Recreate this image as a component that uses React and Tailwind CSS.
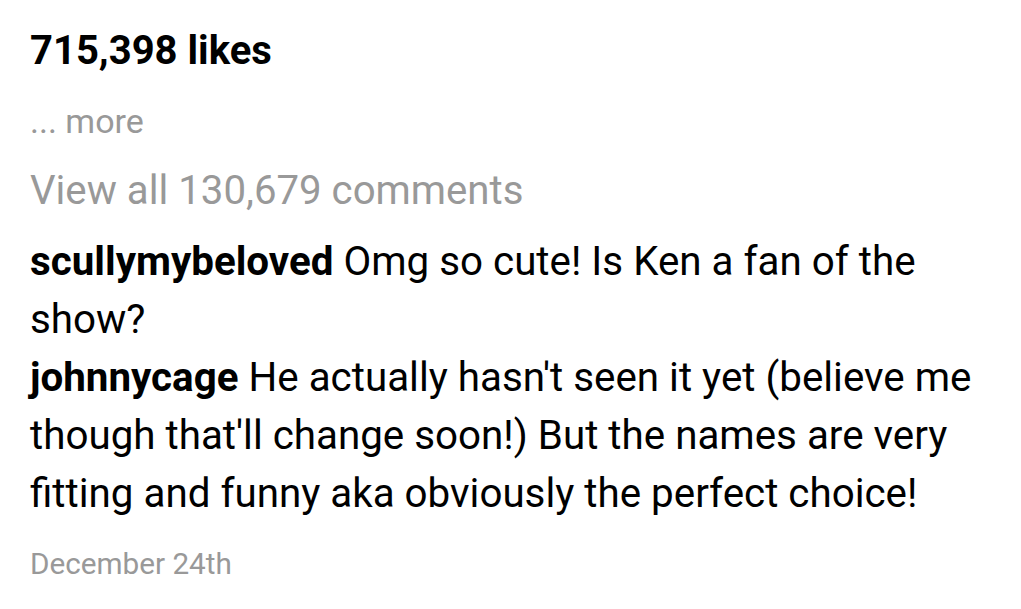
export default function App() {
  return (
    <div className="w-[1021px] h-[609px] bg-white pl-[30px] pr-[30px] pt-[28px] font-['Roboto',sans-serif] text-[40px]">
      <div className="font-bold text-black leading-[46px]">715,398 likes</div>
      <div className="mt-[24px] text-[#999999] text-[34px] leading-[46px]">... more</div>
      <div className="mt-[24px] text-[#999999] text-[40.2px] leading-[46px]">View all 130,679 comments</div>
      <div className="mt-[19px] text-black text-[40.35px] leading-[58px]">
        <div><span className="font-bold">scullymybeloved</span> Omg so cute! Is Ken a fan of the show?</div>
        <div><span className="font-bold">johnnycage</span> He actually hasn't seen it yet (believe me though that'll change soon!) But the names are very fitting and funny aka obviously the perfect choice!</div>
      </div>
      <div className="mt-[23px] text-[#999999] text-[29.7px] leading-[36px]">December 24th</div>
    </div>
  );
}
